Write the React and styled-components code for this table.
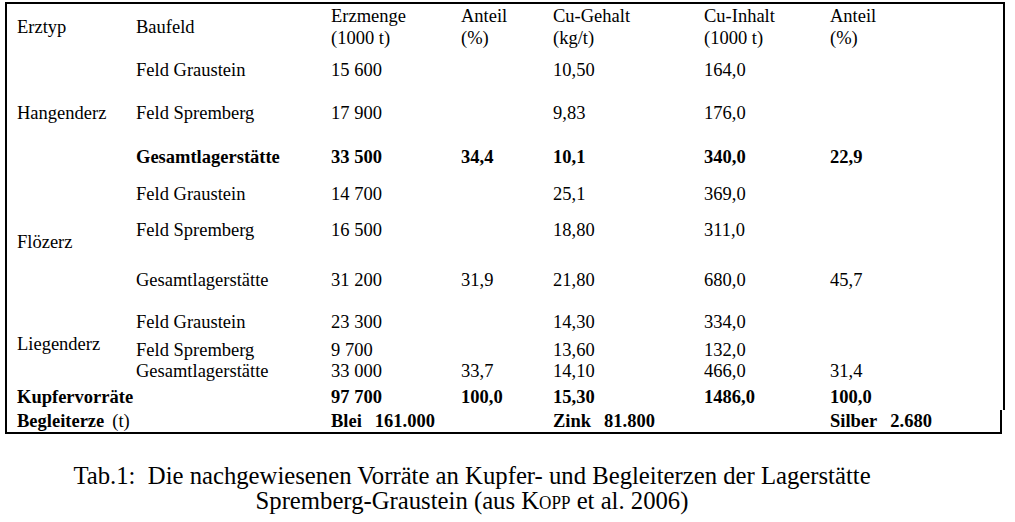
import styled, { createGlobalStyle } from "styled-components";

const GlobalStyle = createGlobalStyle`
  body {
    margin: 0;
    background: #fff;
    color: #000;
    font-family: "Liberation Serif", "Times New Roman", serif;
  }
`;

const COLUMNS = "119px 195px 130px 92px 151px 126px 1fr";

const Page = styled.div`
  padding: 2px 0 0 5px;
  width: 1015px;
  height: 522px;
  box-sizing: border-box;
  overflow: hidden;
`;

const Frame = styled.div`
  width: 1000px;
`;

const Table = styled.div`
  display: grid;
  grid-template-columns: ${COLUMNS};
  grid-template-rows: 55px 43px 44px 37px 36px 50px 42px 28px 21px 26px 24px;
  border: 2px solid #000;
  border-bottom: none;
  padding-left: 10px;
  font-size: 18.5px;
  line-height: 22px;
`;

const FooterRow = styled.div`
  display: grid;
  grid-template-columns: ${COLUMNS};
  width: 997px;
  box-sizing: border-box;
  border: 2px solid #000;
  border-top: none;
  padding-left: 10px;
  font-size: 18.5px;
  line-height: 22px;
  height: 24px;
`;

const Cell = styled.div`
  grid-column: ${(p) => p.$col} / span ${(p) => p.$span || 1};
  grid-row: ${(p) => p.$row};
  font-weight: ${(p) => (p.$bold ? 700 : 400)};
  margin-top: ${(p) => p.$nudge || 0}px;
  white-space: nowrap;
`;

const HeadCell = styled.div`
  grid-column: ${(p) => p.$col};
  grid-row: 1;
  height: 44px;
  margin-top: 1px;
  display: flex;
  flex-direction: column;
  justify-content: center;
  white-space: nowrap;
`;

const Gap = styled.span`
  display: inline-block;
  width: ${(p) => p.$w}px;
`;

const Light = styled.span`
  font-weight: 400;
`;

const Caption = styled.div`
  width: 934px;
  margin-top: 29px;
  text-align: center;
  font-size: 26px;
  line-height: 25px;
  transform: scaleX(0.95);
  transform-origin: center top;
`;

const SmallCaps = styled.span`
  font-variant: small-caps;
`;

const headers = [
  ["Erztyp"],
  ["Baufeld"],
  ["Erzmenge", "(1000 t)"],
  ["Anteil", "(%)"],
  ["Cu-Gehalt", "(kg/t)"],
  ["Cu-Inhalt", "(1000 t)"],
  ["Anteil", "(%)"],
];

// row, bold, cells from column 2 on
const rows = [
  [2, false, ["Feld Graustein", "15 600", "", "10,50", "164,0", ""]],
  [3, false, ["Feld Spremberg", "17 900", "", "9,83", "176,0", ""]],
  [4, true, ["Gesamtlagerstätte", "33 500", "34,4", "10,1", "340,0", "22,9"]],
  [5, false, ["Feld Graustein", "14 700", "", "25,1", "369,0", ""]],
  [6, false, ["Feld Spremberg", "16 500", "", "18,80", "311,0", ""]],
  [7, false, ["Gesamtlagerstätte", "31 200", "31,9", "21,80", "680,0", "45,7"]],
  [8, false, ["Feld Graustein", "23 300", "", "14,30", "334,0", ""]],
  [9, false, ["Feld Spremberg", "9 700", "", "13,60", "132,0", ""]],
  [10, false, ["Gesamtlagerstätte", "33 000", "33,7", "14,10", "466,0", "31,4"]],
  [11, true, ["", "97 700", "100,0", "15,30", "1486,0", "100,0"]],
];

const erztypen = [
  ["Hangenderz", 3, 0],
  ["Flözerz", 6, 12],
  ["Liegenderz", 9, -6],
];

export default function App() {
  return (
    <>
      <GlobalStyle />
      <Page>
        <Frame>
          <Table>
            {headers.map((lines, i) => (
              <HeadCell key={i} $col={i + 1}>
                {lines.map((l) => (
                  <span key={l}>{l}</span>
                ))}
              </HeadCell>
            ))}
            {erztypen.map(([name, row, nudge]) => (
              <Cell key={name} $col={1} $row={row} $nudge={nudge}>
                {name}
              </Cell>
            ))}
            {rows.map(([row, bold, cells]) =>
              cells.map((c, i) =>
                c ? (
                  <Cell key={row + "-" + i} $col={i + 2} $row={row} $bold={bold}>
                    {c}
                  </Cell>
                ) : null
              )
            )}
            <Cell $col={1} $span={2} $row={11} $bold>
              Kupfervorräte
            </Cell>
          </Table>
          <FooterRow>
            <Cell $col={1} $span={2} $row={1} $bold>
              Begleiterze<Gap $w={8} />
              <Light>(t)</Light>
            </Cell>
            <Cell $col={3} $span={2} $row={1} $bold>
              Blei<Gap $w={13} />161.000
            </Cell>
            <Cell $col={5} $span={2} $row={1} $bold>
              Zink<Gap $w={13} />81.800
            </Cell>
            <Cell $col={7} $row={1} $bold>
              Silber<Gap $w={13} />2.680
            </Cell>
          </FooterRow>
        </Frame>
        <Caption>
          Tab.1:&nbsp; Die nachgewiesenen Vorräte an Kupfer- und Begleiterzen der Lagerstätte
          <br />
          Spremberg-Graustein (aus K<SmallCaps>opp</SmallCaps> et al. 2006)
        </Caption>
      </Page>
    </>
  );
}
